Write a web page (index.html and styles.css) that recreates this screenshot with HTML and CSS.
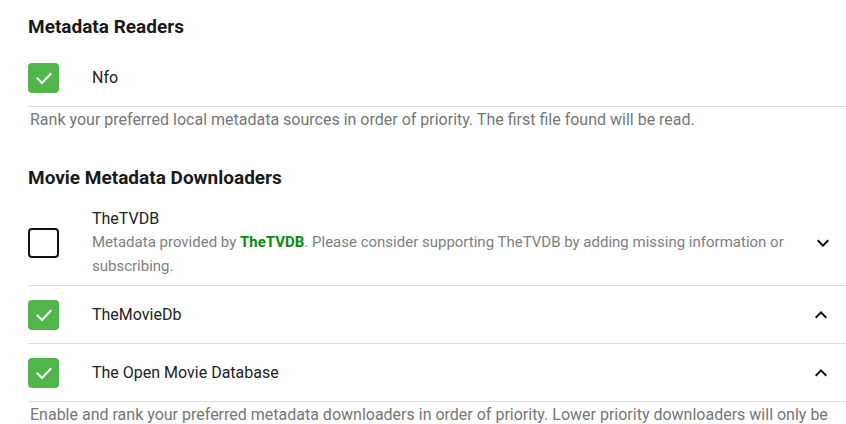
FILE: index.html
```html
<!DOCTYPE html>
<html>
<head>
<meta charset="utf-8">
<link rel="stylesheet" href="styles.css">
</head>
<body>
<div class="page">
  <section class="group">
    <h2 class="group-title">Metadata Readers</h2>
    <div class="list">
      <div class="row">
        <span class="check on"><svg viewBox="0 0 24 24" width="24" height="24"><path d="M5.5 12.5l4.5 4.5 8.5-9" fill="none" stroke="#fff" stroke-width="2" stroke-linecap="square"/></svg></span>
        <div class="row-body"><div class="row-title">Nfo</div></div>
      </div>
    </div>
    <div class="help">Rank your preferred local metadata sources in order of priority. The first file found will be read.</div>
  </section>

  <section class="group second">
    <h2 class="group-title">Movie Metadata Downloaders</h2>
    <div class="list">
      <div class="row tall">
        <span class="check off"></span>
        <div class="row-body">
          <div class="row-title">TheTVDB</div>
          <div class="row-desc">Metadata provided by <b class="link">TheTVDB</b>. Please consider supporting TheTVDB by adding missing information or subscribing.</div>
        </div>
        <span class="chev down"><svg viewBox="0 0 24 24" width="24" height="24"><path d="M16.59 8.59L12 13.17 7.41 8.59 6 10l6 6 6-6z" fill="#111"/></svg></span>
      </div>
      <div class="row">
        <span class="check on"><svg viewBox="0 0 24 24" width="24" height="24"><path d="M5.5 12.5l4.5 4.5 8.5-9" fill="none" stroke="#fff" stroke-width="2" stroke-linecap="square"/></svg></span>
        <div class="row-body"><div class="row-title">TheMovieDb</div></div>
        <span class="chev up"><svg viewBox="0 0 24 24" width="24" height="24"><path d="M12 8l-6 6 1.41 1.41L12 10.83l4.59 4.58L18 14z" fill="#111"/></svg></span>
      </div>
      <div class="row">
        <span class="check on"><svg viewBox="0 0 24 24" width="24" height="24"><path d="M5.5 12.5l4.5 4.5 8.5-9" fill="none" stroke="#fff" stroke-width="2" stroke-linecap="square"/></svg></span>
        <div class="row-body"><div class="row-title">The Open Movie Database</div></div>
        <span class="chev up"><svg viewBox="0 0 24 24" width="24" height="24"><path d="M12 8l-6 6 1.41 1.41L12 10.83l4.59 4.58L18 14z" fill="#111"/></svg></span>
      </div>
    </div>
    <div class="help">Enable and rank your preferred metadata downloaders in order of priority. Lower priority downloaders will only be used to fill in missing information.</div>
  </section>
</div>
</body>
</html>
```
FILE: styles.css
```css
html, body {
  margin: 0;
  padding: 0;
  background: #fff;
  overflow: hidden;
}
body {
  font-family: Roboto, "Liberation Sans", sans-serif;
  color: #222;
}
.page {
  padding-left: 28px;
}
.group-title {
  margin: 16px 0 11px;
  font-size: 19px;
  line-height: 22px;
  font-weight: 700;
  color: #1a1a1a;
}
.second .group-title {
  margin-top: 37px;
  margin-bottom: 13px;
}
.row {
  display: flex;
  align-items: center;
  min-height: 58px;
  padding: 6px 0;
  box-sizing: border-box;
  border-bottom: 1px solid #dcdcdc;
}
.row.tall {
  padding-bottom: 7px;
}
.check {
  flex: none;
  width: 31px;
  height: 30px;
  box-sizing: border-box;
  border-radius: 4px;
  display: flex;
  align-items: center;
  justify-content: center;
}
.check.on {
  background: #52b54b;
}
.check.off {
  border: 2px solid #111;
}
.row-body {
  flex: 1;
  padding-left: 33px;
  min-width: 0;
}
.row-title {
  font-size: 16px;
  line-height: 22px;
  color: #222;
}
.row-desc {
  font-size: 15px;
  line-height: 24px;
  color: #808080;
}
.link {
  color: #0a8a0a;
  font-weight: 700;
}
.chev {
  flex: none;
  width: 24px;
  height: 24px;
  display: flex;
}
.chev.down {
  margin-right: 11px;
  margin-left: 12px;
}
.chev.up {
  margin-right: 13px;
}
.help {
  margin-top: 3px;
  padding-left: 2px;
  font-size: 16px;
  line-height: 20px;
  color: #767676;
}
```
